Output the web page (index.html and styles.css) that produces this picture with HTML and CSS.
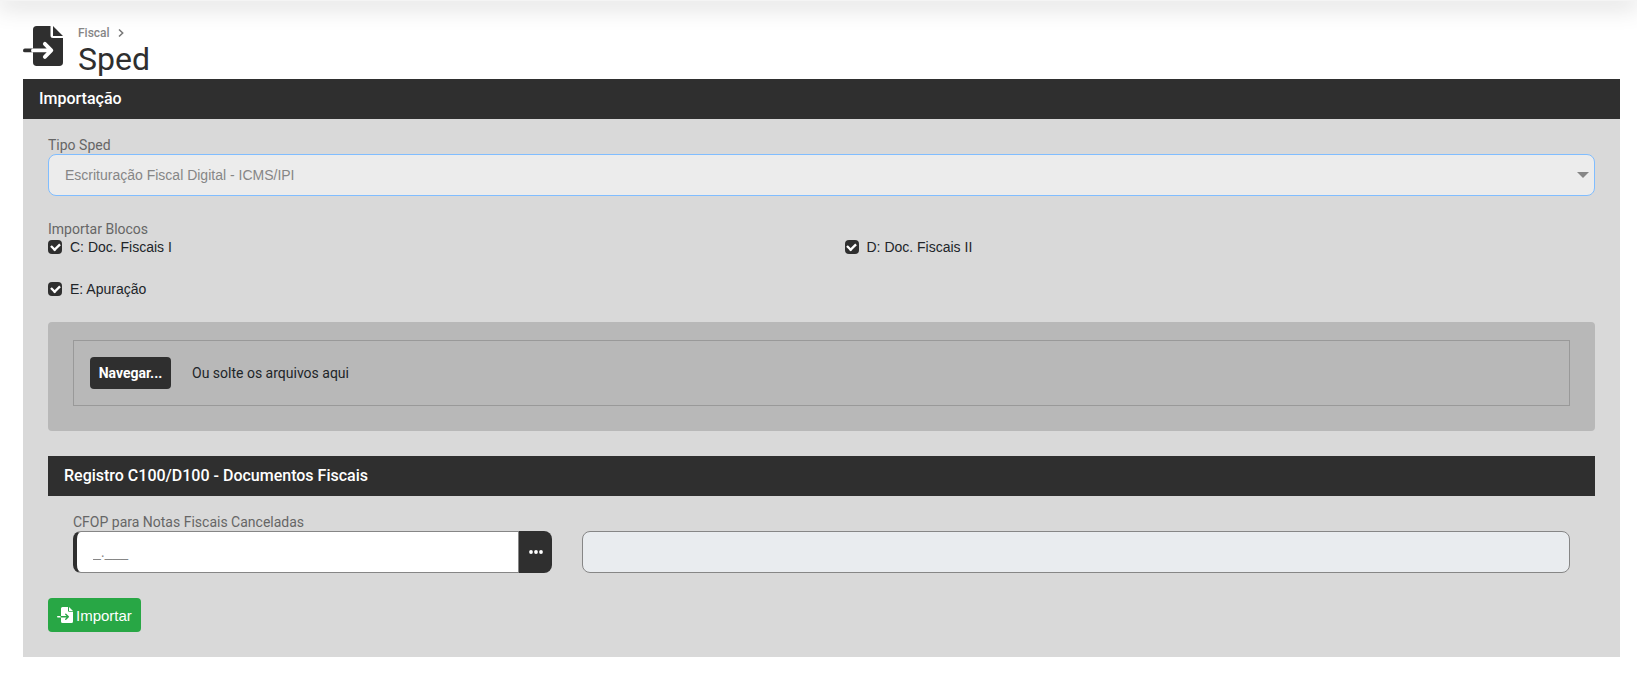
FILE: index.html
```html
<!DOCTYPE html>
<html lang="pt-BR">
<head>
<meta charset="utf-8">
<title>Sped</title>
<link rel="stylesheet" href="styles.css">
</head>
<body>
<div class="topbar"></div>
<main class="page">
  <header class="heading">
    <svg class="heading-icon" viewBox="0 0 512 512" aria-hidden="true">
      <path d="M176 0H352V122Q352 154 384 154H512V464Q512 512 464 512H176Q128 512 128 464V48Q128 0 176 0zM384 0L512 128H384z"/>
      <path d="M128 288V336H24A24 24 0 0 1 24 288z"/>
      <path class="arrow" d="M128 312H350M280 229L362 312L280 395"/>
    </svg>
    <div>
      <nav class="breadcrumb">
        <span>Fiscal</span>
        <svg class="chevron" viewBox="0 0 6 8" aria-hidden="true"><path d="M1 0.500L4.700 4L1 7.500"/></svg>
      </nav>
      <h1 class="title">Sped</h1>
    </div>
  </header>
  <form class="panel">
    <h2 class="bar">Importação</h2>
    <div class="panel-body">
      <div class="field">
        <label class="label" for="tipo">Tipo Sped</label>
        <div class="select-wrap">
          <select id="tipo" class="control select" disabled><option>Escrituração Fiscal Digital - ICMS/IPI</option></select>
        </div>
      </div>
      <fieldset class="blocks">
        <legend class="label">Importar Blocos</legend>
        <div class="checks">
          <label class="check"><input type="checkbox" checked>C: Doc. Fiscais I</label>
          <label class="check"><input type="checkbox" checked>D: Doc. Fiscais II</label>
          <label class="check"><input type="checkbox" checked>E: Apuração</label>
        </div>
      </fieldset>
      <div class="upload">
        <div class="dropzone">
          <button type="button" class="browse">Navegar...</button>
          <span>Ou solte os arquivos aqui</span>
        </div>
      </div>
      <section>
        <h2 class="bar">Registro C100/D100 - Documentos Fiscais</h2>
        <div class="cfop">
          <div>
            <label class="label" for="cfop">CFOP para Notas Fiscais Canceladas</label>
            <div class="group">
              <input id="cfop" class="control code" type="text" placeholder="_.___">
              <button type="button" class="lookup" aria-label="Pesquisar CFOP"><svg viewBox="0 0 14 4" aria-hidden="true"><circle cx="2" cy="2" r="1.900"/><circle cx="7" cy="2" r="1.900"/><circle cx="12" cy="2" r="1.900"/></svg></button>
            </div>
          </div>
          <input class="control description" type="text" aria-label="Descrição do CFOP" readonly>
        </div>
      </section>
      <button type="button" class="submit">
        <svg viewBox="0 0 512 512" aria-hidden="true">
          <path d="M176 0H352V122Q352 154 384 154H512V464Q512 512 464 512H176Q128 512 128 464V48Q128 0 176 0zM384 0L512 128H384z"/>
          <path d="M128 288V336H24A24 24 0 0 1 24 288z"/>
          <path class="arrow" d="M128 312H350M280 229L362 312L280 395"/>
        </svg>
        Importar
      </button>
    </div>
  </form>
</main>
</body>
</html>
```

FILE: styles.css
```css
* { box-sizing: border-box; }
body { margin: 0; background: #fff; color: #212529; font: 14px/18px Roboto, sans-serif; }
.topbar { height: 1px; background: #f4f4f4; box-shadow: 0 0 24px 2px rgba(0, 0, 0, .42); }
.page { padding: 23px 17px 28px 23px; }
.heading { display: flex; gap: 15px; height: 55px; }
.heading-icon { width: 40px; height: 40px; margin-top: 2px; fill: #2f2f2f; }
.heading-icon .arrow { fill: none; stroke: #fff; stroke-width: 50; stroke-linecap: round; stroke-linejoin: round; }
.breadcrumb { display: flex; align-items: center; gap: 8px; font-size: 12px; font-weight: 500; line-height: 18px; color: #868686; }
.chevron { width: 6px; height: 8px; fill: none; stroke: #777; stroke-width: 1.5; }
.title { margin: 0; font-size: 32px; font-weight: 400; line-height: 34px; color: #2f2f2f; }
.panel { background: #d9d9d9; }
.bar { margin: 0; padding: 0 16px; background: #2f2f2f; color: #fff; font-size: 16px; font-weight: 500; line-height: 40px; }
.panel-body { padding: 17px 25px 25px; }
.label { display: block; padding: 0; line-height: 18px; color: #666; }
.control { display: block; width: 100%; height: 42px; margin: 0; padding: 0 16px; border: 1px solid #868686; border-radius: 8px; background: #fff; font: 14px "Liberation Sans", Arial, sans-serif; }
.select-wrap { position: relative; }
.select-wrap::after { content: ""; position: absolute; right: 6px; top: 18px; border: 6px solid transparent; border-top-color: #868686; border-bottom: 0; }
.select { appearance: none; border-color: #80bdff; background: #ececec; color: #868686; opacity: 1; }
.blocks { margin: 24px 0 0; padding: 0; border: 0; }
.checks { display: grid; grid-template-columns: 1fr 1fr; row-gap: 24px; column-gap: 46px; }
.check { display: flex; align-items: center; gap: 8px; font: 14px/18px "Liberation Sans", Arial, sans-serif; }
.check input { appearance: none; width: 14px; height: 14px; margin: 0; border-radius: 4px; background: #2f2f2f; display: grid; place-items: center; }
.check input:checked::before { content: ""; width: 8px; height: 5px; margin-bottom: 2px; border: solid #fff; border-width: 0 0 3px 3px; transform: rotate(-45deg) scale(.8); }
.upload { margin: 24px 0 25px; padding: 18px 25px 25px; border-radius: 4px; background: #b8b8b8; }
.dropzone { display: flex; align-items: center; gap: 21px; padding: 16px; border: 1px solid #999; }
.browse { width: 81px; height: 32px; padding: 0; border: 0; border-radius: 4px; background: #2f2f2f; color: #fff; font: 700 14px Roboto, sans-serif; }
.cfop { display: grid; grid-template-columns: 479fr 988fr; column-gap: 30px; align-items: end; padding: 17px 25px 25px; }
.group { display: flex; }
.code { flex: 1; border-left: 4px solid #2f2f2f; border-radius: 8px 0 0 8px; padding-left: 16px; }
.code::placeholder { color: #868686; opacity: 1; }
.lookup { width: 33px; padding: 0; border: 0; border-radius: 0 8px 8px 0; background: #2f2f2f; }
.lookup svg { display: block; width: 14px; height: 4px; margin: 0 auto; fill: #fff; }
.description { background: #e9ecef; }
.submit { display: flex; align-items: center; gap: 3px; height: 34px; padding: 0 9px; border: 0; border-radius: 4px; background: #28a745; color: #fff; font: 15px "Liberation Sans", Arial, sans-serif; }
.submit svg { width: 16px; height: 16px; fill: #fff; }
.submit .arrow { fill: none; stroke: #28a745; stroke-width: 44; stroke-linecap: round; stroke-linejoin: round; }
```
